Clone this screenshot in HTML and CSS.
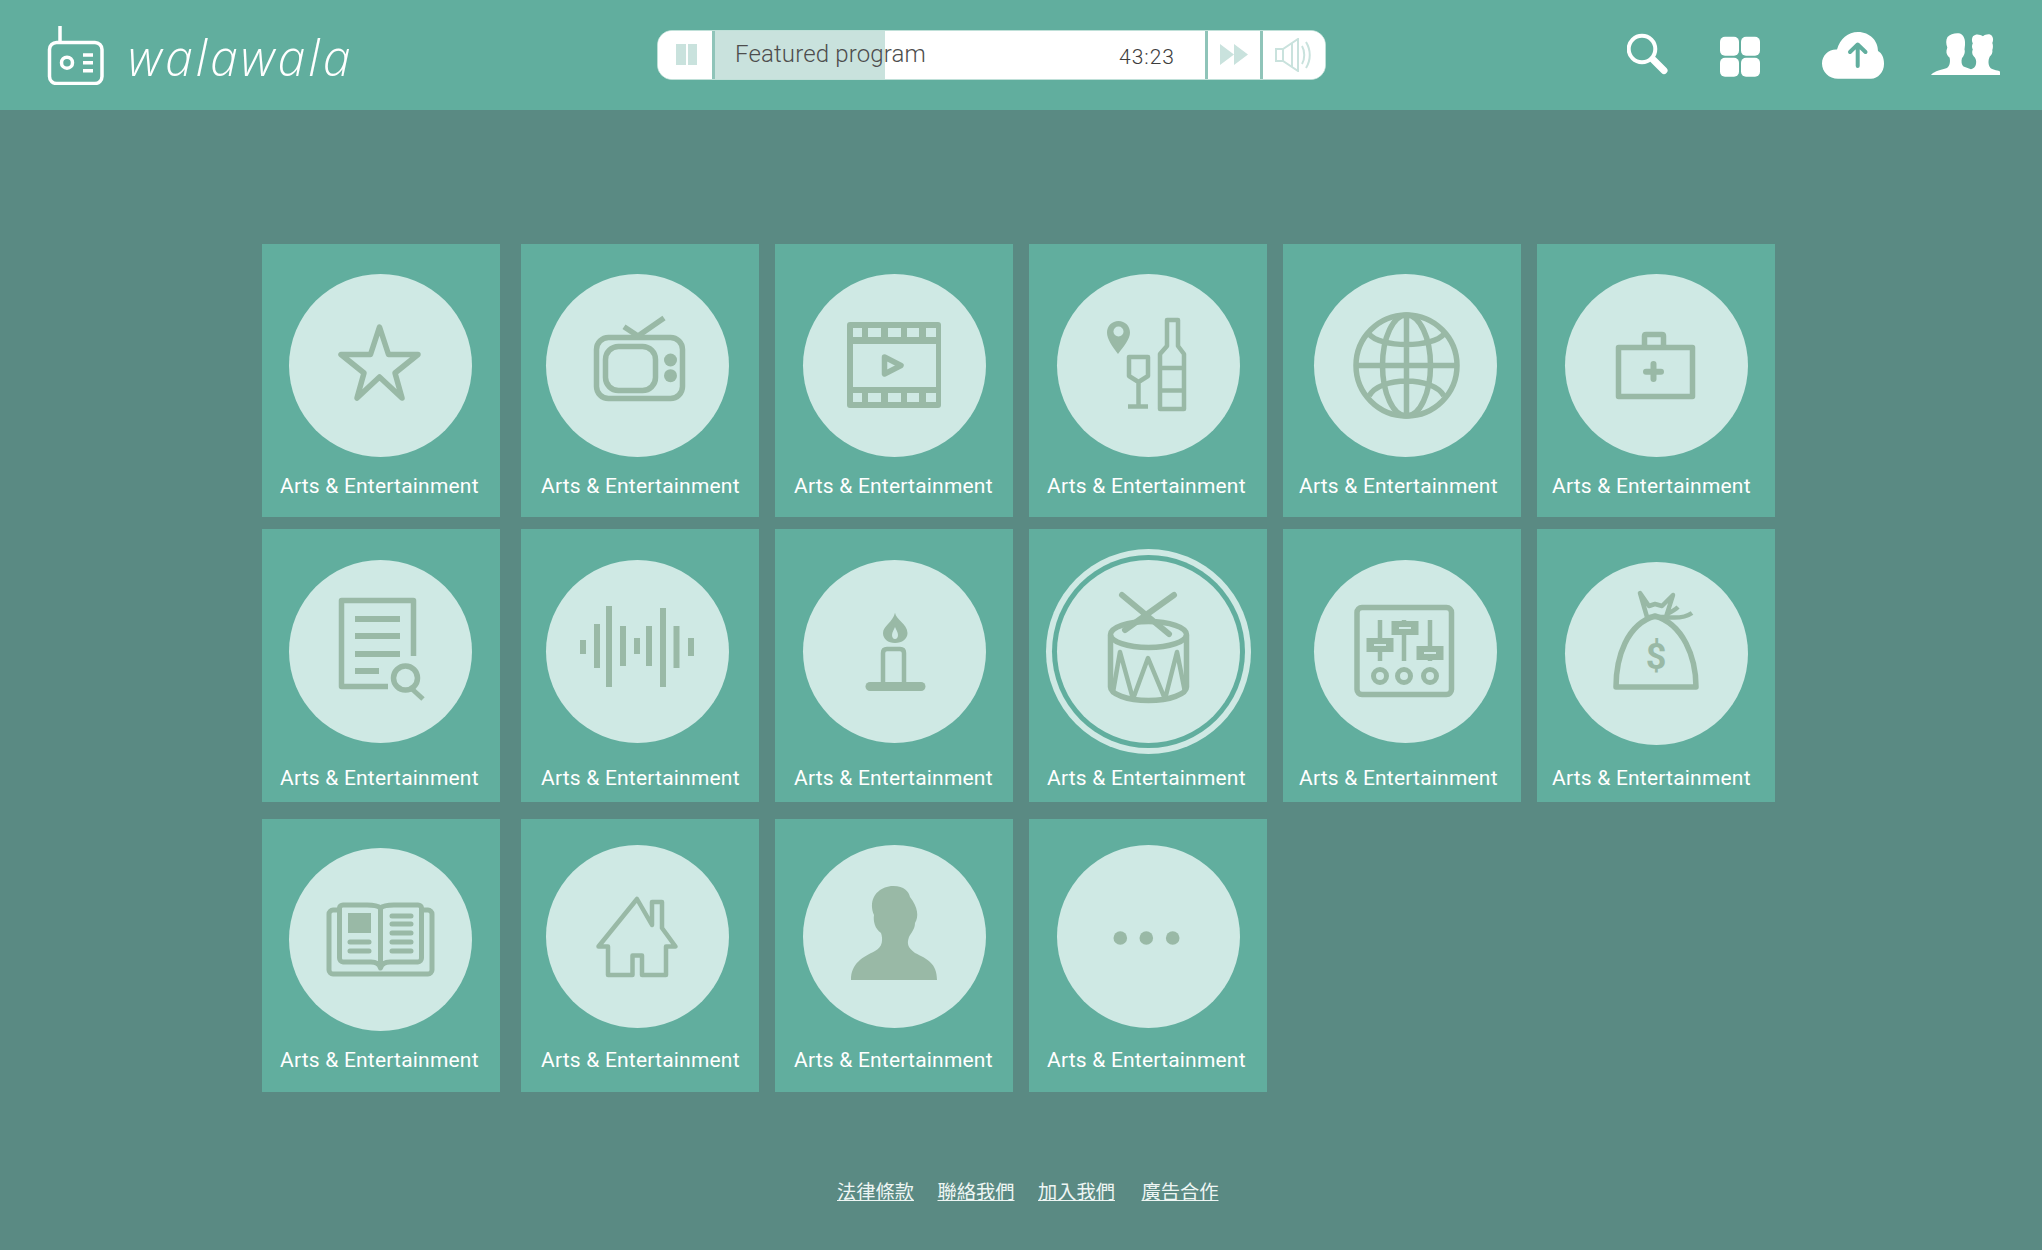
FILE: index.html
```html
<!DOCTYPE html>
<html lang="zh-Hant">
<head>
    <meta charset="UTF-8">
    <meta name="viewport" content="width=device-width, initial-scale=1.0">
    <title>walawala</title>
    <link rel="stylesheet" href="styles.css">
</head>
<body>
    <header class="topbar">
        <div class="brand">
            <svg class="brand-icon" width="58" height="60" viewBox="47 25 58 60">
                <path class="line" d="M60 26V42"/>
                <rect class="line" x="49.5" y="42.5" width="52.5" height="41" rx="7"/>
                <circle class="line" cx="67" cy="62.7" r="5.5"/>
                <path class="line" d="M83 55H93M83 62.7H93M83 70.7H93"/>
            </svg>
            <span class="brand-name">walawala</span>
        </div>

        <div class="player">
            <div class="player-btn pause">
                <svg width="22" height="22" viewBox="0 0 22 22"><path class="tint" d="M0 0H10V21H0ZM12 0H21V21H12Z"/></svg>
            </div>
            <div class="track">
                <span class="track-title">Featured program</span>
                <span class="track-time">43:23</span>
            </div>
            <div class="player-btn next">
                <svg width="28" height="22" viewBox="0 0 28 22"><path class="tint" d="M0 0L14 10.5L0 21ZM14 0L28 10.5L14 21Z"/></svg>
            </div>
            <div class="player-btn volume">
                <svg width="38" height="34" viewBox="0 0 38 34">
                    <path class="tint-line" d="M1 11H8L23 1V33L8 23H1ZM8 11V23M17 5V29"/>
                    <path class="tint-line" d="M27 8C30 13 30 21 27 26M31 4C36 12 36 22 31 30"/>
                </svg>
            </div>
        </div>

        <nav class="tools">
            <svg class="tool-search" width="41" height="60" viewBox="1627 25 41 60">
                <circle class="line-thick" cx="1642" cy="49" r="13.3"/>
                <path class="line-handle" d="M1653.5 60L1664 70.5"/>
            </svg>
            <svg class="tool-grid" width="40" height="60" viewBox="1720 25 40 60">
                <rect class="fill-white" x="1720" y="36.7" width="19" height="19" rx="5"/>
                <rect class="fill-white" x="1741" y="36.7" width="19" height="19" rx="5"/>
                <rect class="fill-white" x="1720" y="57.7" width="19" height="19" rx="5"/>
                <rect class="fill-white" x="1741" y="57.7" width="19" height="19" rx="5"/>
            </svg>
            <svg class="tool-upload" width="62" height="60" viewBox="1822 25 62 60">
                <path class="fill-white" d="M1838 78.7C1829 78.7 1822 72 1822 63.5C1822 55 1829 49 1837 49.5C1840 39 1848 32 1858 32C1870 32 1878 41 1878 51C1882 53 1884 58 1884 64C1884 72 1878 78.7 1871 78.7Z"/>
                <path class="arrow" d="M1857.7 66V45M1850 52L1857.7 44.5L1865.5 52"/>
            </svg>
            <svg class="tool-people" width="69" height="60" viewBox="1931 25 69 60">
                <path class="fill-white" d="M1931 75C1933 72 1938 70.5 1947 68C1950 66 1950.5 61 1949.5 57.5C1947.5 56 1946 53.5 1946.5 50.5L1947.3 47.5C1946 44 1945.7 40 1947.5 37C1950 34 1956 32.5 1960 33.5C1964 35 1965.5 40 1965 45L1964.5 49.5C1965.5 52 1964 56 1962 58C1961 61.5 1961.5 65 1963.5 66.5L1971 69.2C1973.5 68.5 1975.5 67 1976 64C1976.5 61 1976 58 1973.5 56C1972 54 1971.8 51.5 1972.8 49.5C1971.7 47.5 1971.8 45 1972.8 43.5C1971.5 41 1971.7 38 1973 36.2C1976 33.5 1980 34.5 1983 36.2C1986 33.8 1990.5 33.5 1992 36C1993.5 38 1993.3 41 1992.3 43C1993.3 45.5 1993 48 1992.3 50C1993 52.5 1991.5 55 1989.8 56.5C1988 60 1988 65 1990.5 68C1993 70 1999 70.5 2000 71.5V75Z"/>
            </svg>
        </nav>
    </header>

    <main class="categories">
        <a class="card col1 row1" href="#">
            <span class="disc">
                <svg class="glyph" viewBox="0 0 183 183"><path d="M90.5 53L99.5 80.5H129L106 99L113 124L90.5 103L68 124L75 99L52 80.5H81.5Z"/></svg>
            </span>
            <span class="label">Arts &amp; Entertainment</span>
        </a>
        <a class="card col2 row1" href="#">
            <span class="disc">
                <svg class="glyph" viewBox="0 0 183 183">
                    <rect x="50.5" y="63.5" width="86" height="61" rx="12"/>
                    <rect x="59.5" y="72.5" width="50" height="44" rx="13"/>
                    <circle class="solid" cx="124.5" cy="86" r="6.5"/>
                    <circle class="solid" cx="124.5" cy="101.7" r="6.5"/>
                    <path d="M78 52.7L92 62L118 44"/>
                </svg>
            </span>
            <span class="label">Arts &amp; Entertainment</span>
        </a>
        <a class="card col3 row1" href="#">
            <span class="disc">
                <svg class="glyph" viewBox="0 0 183 183">
                    <rect class="solid" x="44" y="48" width="94" height="86" rx="3"/>
                    <path class="hole" d="M50 54H59V63H50ZM65 54H78V63H65ZM85 54H98V63H85ZM104 54H116V63H104ZM123 54H133V63H123ZM50 119H59V128H50ZM65 119H78V128H65ZM85 119H98V128H85ZM104 119H116V128H104ZM123 119H133V128H123ZM50 70H133V113H50Z"/>
                    <path d="M81.5 83L98 91.5L81.5 100Z"/>
                </svg>
            </span>
            <span class="label">Arts &amp; Entertainment</span>
        </a>
        <a class="card col4 row1" href="#">
            <span class="disc">
                <svg class="glyph" viewBox="0 0 183 183">
                    <path class="solid" d="M61.5 47C68 47 73 52 73 58.5C73 65 67 72 61 80C55 72 50 65 50 58.5C50 52 55 47 61.5 47Z"/>
                    <circle class="hole" cx="61.5" cy="57.5" r="5"/>
                    <path class="thin" d="M72 83H91V102L81.5 108L72 102ZM81.5 108V132M71 132.5H91"/>
                    <path class="thin" d="M110 46H121V72L127 80V135H103V80L110 72ZM103 94H127M103 116.5H127"/>
                </svg>
            </span>
            <span class="label">Arts &amp; Entertainment</span>
        </a>
        <a class="card col5 row1" href="#">
            <span class="disc">
                <svg class="glyph" viewBox="0 0 183 183">
                    <circle cx="92.5" cy="91.5" r="50.5"/>
                    <ellipse cx="92.5" cy="91.5" rx="24" ry="50.5"/>
                    <path d="M92.5 41V142M42 91.5H143M55 60C66 74 119 74 130 60M55 122C66 102 119 102 130 122"/>
                </svg>
            </span>
            <span class="label">Arts &amp; Entertainment</span>
        </a>
        <a class="card col6 row1" href="#">
            <span class="disc">
                <svg class="glyph" viewBox="0 0 183 183">
                    <rect x="53.5" y="73.5" width="74" height="49"/>
                    <path d="M79.5 72V62C79.5 61 80 60.5 81 60.5H97C98 60.5 98.5 61 98.5 62V72"/>
                    <path class="cross" d="M88.5 90V105M81 97.7H96"/>
                </svg>
            </span>
            <span class="label">Arts &amp; Entertainment</span>
        </a>

        <a class="card col1 row2" href="#">
            <span class="disc">
                <svg class="glyph" viewBox="0 0 183 183">
                    <path d="M99 126.5H52.5V40.5H124.5V96"/>
                    <path class="bar" d="M66 59H111M66 76H111M66 94H111M66 111H90"/>
                    <circle cx="116.5" cy="118" r="12"/>
                    <path class="bar-butt" d="M123 129L134 139"/>
                </svg>
            </span>
            <span class="label">Arts &amp; Entertainment</span>
        </a>
        <a class="card col2 row2" href="#">
            <span class="disc">
                <svg class="glyph" viewBox="0 0 183 183">
                    <path class="bar" d="M37 80V94M51 64V108M63 46V127M77 66V106M91 78V94M103 66V106M117 48V127M130.5 66V108M145 78V96"/>
                </svg>
            </span>
            <span class="label">Arts &amp; Entertainment</span>
        </a>
        <a class="card col3 row2" href="#">
            <span class="disc">
                <svg class="glyph" viewBox="0 0 183 183">
                    <path class="solid" d="M92 52.7C93 60 104 63 104.5 73C104.5 79 99 83 92 83C85 83 80 79 80 73C80 66 90 62 92 52.7Z"/>
                    <path class="hole" d="M92 67C93 70 95 72 95 75C95 77 94 79 92 79C90 79 89 77 89 75C89 72 91 70 92 67Z"/>
                    <path class="thin" d="M80 123V93C80 90 82 89 84 89H97C99 89 101 90 101 93V123"/>
                    <path class="base" d="M67 126.5H118"/>
                </svg>
            </span>
            <span class="label">Arts &amp; Entertainment</span>
        </a>
        <a class="card col4 row2 active" href="#">
            <span class="disc">
                <svg class="glyph" viewBox="0 0 183 183">
                    <ellipse cx="91.5" cy="74.5" rx="38" ry="13"/>
                    <path d="M53.5 75V127C53.5 134 70 140.5 91.5 140.5C113 140.5 129.5 134 129.5 127V75"/>
                    <path class="thin" d="M56 132L63 92L76 139L91 98L108 139L120 92L128 132"/>
                    <path class="stick" d="M65 35L112 74M117 35L68 70"/>
                </svg>
            </span>
            <span class="label">Arts &amp; Entertainment</span>
        </a>
        <a class="card col5 row2" href="#">
            <span class="disc">
                <svg class="glyph" viewBox="0 0 183 183">
                    <rect x="43" y="47.5" width="94.5" height="87" rx="5"/>
                    <path class="thin" d="M66 60V101M90 60V101M116 60V101"/>
                    <path class="solid" d="M52.5 78H79.5V92H52.5ZM77.5 61H104.5V75H77.5ZM102.5 86H129.5V100H102.5Z"/>
                    <path class="knob" d="M60 85H72M85 68H97M110 93H122"/>
                    <circle class="ring" cx="66" cy="116" r="6.5"/>
                    <circle class="ring" cx="90" cy="116" r="6.5"/>
                    <circle class="ring" cx="116" cy="116" r="6.5"/>
                </svg>
            </span>
            <span class="label">Arts &amp; Entertainment</span>
        </a>
        <a class="card col6 row2 bag" href="#">
            <span class="disc">
                <svg class="glyph" viewBox="0 0 183 183">
                    <path d="M51 125C51 95 62 62 90 54C118 62 131 95 131 125Z"/>
                    <path class="thin" d="M75 31L82 55H101L108 33L97 44L90 42L84 44ZM100 55C108 56 120 56 127 51M102 52C106 50 110 48 113 45"/>
                    <text class="money" x="91" y="107">$</text>
                </svg>
            </span>
            <span class="label">Arts &amp; Entertainment</span>
        </a>

        <a class="card col1 row3 book" href="#">
            <span class="disc">
                <svg class="glyph" viewBox="0 0 183 183">
                    <path class="thick" d="M50 62H44C42 62 40 64 40 66V122C40 124 42 126 44 126H139C141 126 143 124 143 122V66C143 64 141 62 139 62H134"/>
                    <path class="thick" d="M91.5 60C88 57 82 57 78 57H54C52 57 50.5 58.5 50.5 60V110C50.5 112 52 114 54 114H82C86 114 90 115 91.5 120C93 115 97 114 101 114H129C131 114 132.5 112 132.5 110V60C132.5 58.5 131 57 129 57H105C101 57 95 57 91.5 60ZM91.5 60V120"/>
                    <rect class="solid" x="59" y="65" width="23" height="20"/>
                    <path class="bar-round" d="M61 94H80M61 103H80M103 68H122M103 76H122M103 85H122M103 94H122M103 103H122"/>
                </svg>
            </span>
            <span class="label">Arts &amp; Entertainment</span>
        </a>
        <a class="card col2 row3" href="#">
            <span class="disc">
                <svg class="glyph" viewBox="0 0 183 183">
                    <path class="thin" d="M91 54L106 80V57H116V83L129.5 101.5H120V130H96V110.5H86.5V130H62V101.5H52.5Z"/>
                </svg>
            </span>
            <span class="label">Arts &amp; Entertainment</span>
        </a>
        <a class="card col3 row3" href="#">
            <span class="disc">
                <svg class="glyph" viewBox="0 0 183 183">
                    <path class="solid" d="M48 135C48 118 60 112 72 106C80 102 80 94 78 88C72 84 70 76 71 70C66 58 70 44 88 41C100 40 106 46 107 52C115 62 116 72 112 78C112 84 108 88 106 92C104 98 104 102 112 108C124 114 134 118 134 135Z"/>
                </svg>
            </span>
            <span class="label">Arts &amp; Entertainment</span>
        </a>
        <a class="card col4 row3" href="#">
            <span class="disc">
                <svg class="glyph" viewBox="0 0 183 183">
                    <circle class="solid" cx="63.3" cy="93" r="6.8"/>
                    <circle class="solid" cx="89.3" cy="93" r="6.8"/>
                    <circle class="solid" cx="115.7" cy="93" r="6.8"/>
                </svg>
            </span>
            <span class="label">Arts &amp; Entertainment</span>
        </a>
    </main>

    <footer class="legal">
        <a href="#">法律條款</a>
        <a href="#">聯絡我們</a>
        <a href="#">加入我們</a>
        <a class="legal-last" href="#">廣告合作</a>
    </footer>
</body>
</html>
```

FILE: styles.css
```css
body {
    margin: 0;
    height: 1250px;
    overflow: hidden;
    background-color: #5a8a83;
    font-family: Roboto, Arial, sans-serif;
    color: white;
}

/* top bar */
.topbar {
    display: flex;
    align-items: center;
    height: 110px;
    padding-left: 47px;
    background-color: #61ae9e;
}

.brand {
    display: flex;
    align-items: center;
    width: 610px;
}

.brand-icon {
    flex: none;
}

.line {
    fill: none;
    stroke: white;
    stroke-width: 3.5;
}

.brand-name {
    margin: 4px 0 0 23px;
    font-family: "Open Sans", sans-serif;
    font-size: 50px;
    font-style: italic;
    font-weight: 300;
    letter-spacing: 3px;
    line-height: 60px;
}

.player {
    display: flex;
    flex: none;
    width: 669px;
    height: 50px;
    box-sizing: border-box;
    overflow: hidden;
    background-color: white;
    border: 1px solid #bfe0d8;
    border-radius: 15px;
}

.player-btn {
    display: flex;
    align-items: center;
    justify-content: center;
    flex: none;
    background-color: white;
}

.pause {
    width: 50px;
    padding-left: 4px;
    border-right: 3px solid #8fc4b9;
}

.next {
    width: 52px;
    border-left: 3px solid #8fc4b9;
    border-right: 3px solid #8fc4b9;
}

.volume {
    flex: 1;
}

.tint {
    fill: #c9e2dd;
}

.tint-line {
    fill: none;
    stroke: #c9e2dd;
    stroke-width: 2;
}

.track {
    display: flex;
    align-items: center;
    justify-content: space-between;
    flex: none;
    width: 490px;
    box-sizing: border-box;
    padding: 0 30px 0 20px;
    background: linear-gradient(to right, #c9e2dd 170px, white 170px);
}

.track-title {
    margin-top: -3px;
    color: #4d4d4d;
    font-size: 24px;
    font-weight: 300;
    letter-spacing: 0.15px;
}

.track-time {
    margin-top: 3px;
    color: #3d3d3d;
    font-size: 21px;
    font-weight: 300;
    letter-spacing: 1px;
}

.tools {
    display: flex;
    margin-left: 301px;
}

.tool-grid {
    margin-left: 52px;
}

.tool-upload {
    margin-left: 62px;
}

.tool-people {
    margin-left: 47px;
}

.fill-white {
    fill: white;
}

.line-thick {
    fill: none;
    stroke: white;
    stroke-width: 4;
}

.line-handle {
    fill: none;
    stroke: white;
    stroke-width: 7;
    stroke-linecap: round;
}

.arrow {
    fill: none;
    stroke: #61ae9e;
    stroke-width: 4;
    stroke-linecap: round;
    stroke-linejoin: round;
}

/* category grid */
.categories {
    display: grid;
    grid-template-columns: 243px repeat(5, 238px);
    grid-template-rows: 273px 278px 273px;
    gap: 12px 16px;
    padding: 134px 0 0 262px;
}

.card {
    display: flex;
    flex-direction: column;
    align-items: flex-start;
    width: 238px;
    height: 273px;
    background-color: #61ae9e;
    color: white;
    text-decoration: none;
}

.disc {
    display: block;
    flex: none;
    width: 183px;
    height: 183px;
    border-radius: 50%;
    background-color: #cfe9e4;
}

.label {
    margin-top: auto;
    font-size: 21px;
    letter-spacing: 0.2px;
    line-height: 24px;
    white-space: nowrap;
}

.col1 .disc { margin-left: 27px; }
.col2 .disc { margin-left: 25px; }
.col3 .disc { margin-left: 28px; }
.col4 .disc { margin-left: 28px; }
.col5 .disc { margin-left: 31px; }
.col6 .disc { margin-left: 28px; }

.col1 .label { margin-left: 18px; }
.col2 .label { margin-left: 20px; }
.col3 .label { margin-left: 19px; }
.col4 .label { margin-left: 18px; }
.col5 .label { margin-left: 16px; }
.col6 .label { margin-left: 15px; }

.row1 .disc { margin-top: 30px; }
.row2 .disc { margin-top: 31px; }
.row3 .disc { margin-top: 26px; }
.book .disc { margin-top: 29px; }
.bag .disc { margin-top: 33px; }

.row1 .label { padding-bottom: 19px; }
.row2 .label { padding-bottom: 12px; }
.row3 .label { padding-bottom: 20px; }

.active .disc {
    box-shadow: 0 0 0 5px #61ae9e, 0 0 0 11px #cfe9e4;
}

/* icons inside the discs */
.glyph {
    display: block;
    width: 183px;
    height: 183px;
    fill: none;
    stroke: #99b9a6;
    stroke-width: 5.5;
    stroke-linejoin: round;
}

.glyph .solid {
    fill: #99b9a6;
    stroke: none;
}

.glyph .hole {
    fill: #cfe9e4;
    stroke: none;
}

.glyph .thin {
    stroke-width: 4.5;
}

.glyph .thick {
    stroke-width: 5;
}

.glyph .stick {
    stroke-width: 6;
    stroke-linecap: round;
}

.glyph .bar {
    stroke-width: 6;
}

.glyph .bar-butt {
    stroke-width: 5;
}

.glyph .bar-round {
    stroke-width: 5;
    stroke-linecap: round;
}

.glyph .cross {
    stroke-width: 6;
    stroke-linecap: round;
}

.glyph .base {
    stroke-width: 9;
    stroke-linecap: round;
}

.glyph .knob {
    stroke: #cfe9e4;
    stroke-width: 2;
}

.glyph .ring {
    stroke-width: 5;
}

.glyph .money {
    fill: #99b9a6;
    stroke: none;
    font-family: Roboto, sans-serif;
    font-size: 36px;
    font-weight: 700;
    text-anchor: middle;
}

/* footer links */
.legal {
    display: flex;
    margin-top: 86px;
    padding-left: 837px;
    font-family: "Noto Sans CJK TC", sans-serif;
    font-size: 19.25px;
    font-weight: 400;
    line-height: 26px;
}

.legal a {
    margin-right: 23.5px;
    color: #eef6f4;
}

.legal .legal-last {
    margin-left: 3px;
}
```
